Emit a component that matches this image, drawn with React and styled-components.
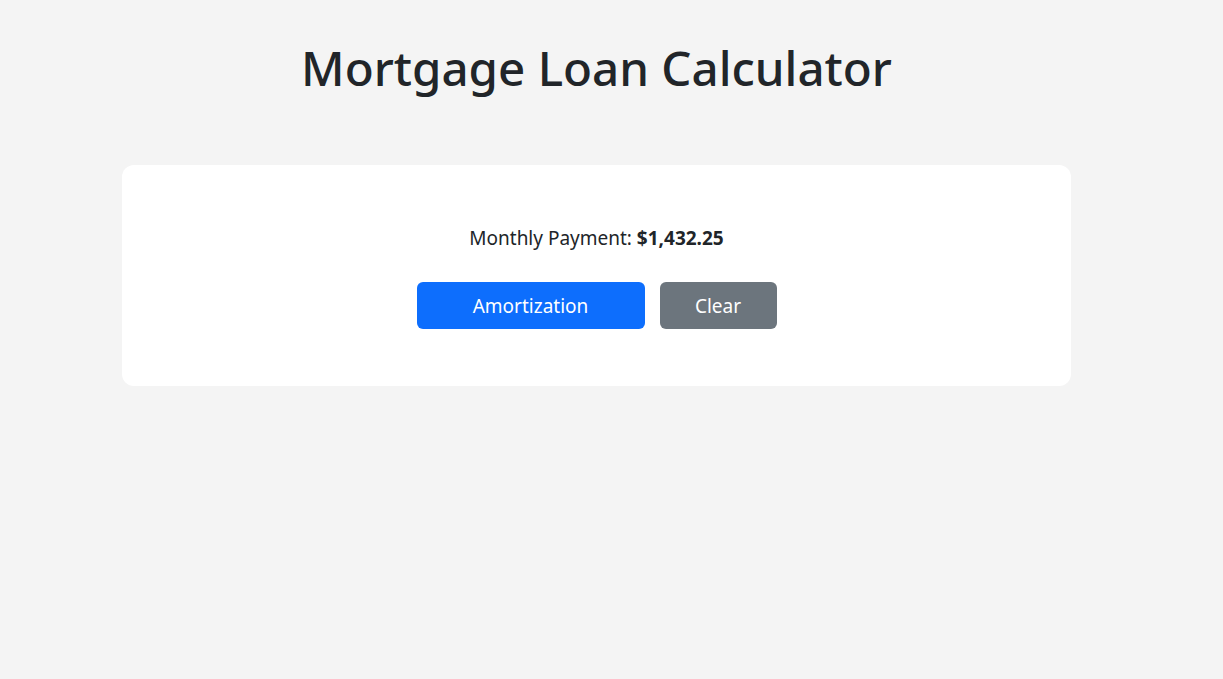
import React from 'react';
import styled, { createGlobalStyle } from 'styled-components';

const GlobalStyle = createGlobalStyle`
    body {
        margin: 0;
        background-color: #f4f4f4;
        color: #212529;
        font-family: "Noto Sans", "Open Sans", sans-serif;
    }
`;

const Page = styled.div`
    display: flex;
    flex-direction: column;
    align-items: center;
    padding: 33px 30px 0 0;
    min-height: 100vh;
    box-sizing: border-box;
`;

const Title = styled.h1`
    margin: 0 0 62px;
    font-size: 47.5px;
    font-weight: 500;
    line-height: 70px;
    color: #212529;
`;

const Card = styled.div`
    width: 949px;
    box-sizing: border-box;
    background: #fff;
    border-radius: 12px;
    padding: 58px 0 57px;
    display: flex;
    flex-direction: column;
    align-items: center;
`;

const Result = styled.p`
    margin: 0 0 29px;
    font-size: 19px;
    line-height: 30px;
    color: #212529;

    strong {
        font-weight: 700;
    }
`;

const Buttons = styled.div`
    display: flex;
    gap: 15px;
`;

const Button = styled.button`
    width: ${p => p.$width}px;
    height: 47px;
    border: none;
    border-radius: 6px;
    background-color: ${p => p.$color};
    color: #fff;
    font-family: inherit;
    font-size: 19px;
    cursor: pointer;
`;

const App = () => {
    return (
        <Page>
            <GlobalStyle />
            <Title>Mortgage Loan Calculator</Title>

            <Card>
                <Result>
                    Monthly Payment: <strong>$1,432.25</strong>
                </Result>

                <Buttons>
                    <Button $width={228} $color="#0d6efd">Amortization</Button>
                    <Button $width={117} $color="#6c757d">Clear</Button>
                </Buttons>
            </Card>
        </Page>
    );
};

export default App;
